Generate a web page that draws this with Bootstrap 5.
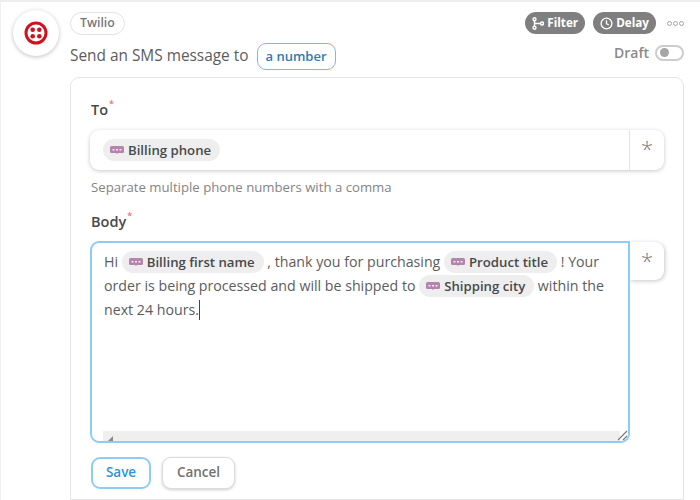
<!DOCTYPE html>
<html lang="en">
<head>
    <meta charset="UTF-8">
    <meta name="viewport" content="width=device-width, initial-scale=1.0">
    <title>Twilio step</title>
    <link href="https://cdn.jsdelivr.net/npm/bootstrap@5.3.0/dist/css/bootstrap.min.css" rel="stylesheet">
    <style>
        html, body {
            height: 500px;
            overflow: hidden;
        }
        body {
            background-color: #fff;
            font-family: "Open Sans", "Noto Sans", sans-serif;
            color: #5c5c5f;
        }
        .step-frame {
            height: 500px;
            border-top: 2px solid #eeeeee;
            border-left: 1px solid #f0f0f0;
            padding: 10px 16px 0 12px;
        }
        .step-logo {
            width: 46px;
            height: 46px;
            margin-top: -2px;
            border-radius: 50%;
            box-shadow: 0 1px 4px rgba(0, 0, 0, .25);
            flex: none;
        }
        .step-main {
            margin-left: 11px;
            min-width: 0;
        }
        .app-pill {
            height: 23px;
            padding: 0 9px;
            border: 1px solid #e2e2e2;
            border-radius: 12px;
            font-size: 12.3px;
            font-weight: 600;
            color: #77777a;
        }
        .action-pill {
            height: 22px;
            padding: 0 7px;
            border-radius: 11px;
            background-color: #7f7f7f;
            color: #fff;
            font-size: 11.7px;
            font-weight: 700;
            gap: 3px;
        }
        .more-dots {
            gap: 1px;
            margin-left: 3px;
        }
        .more-dots i {
            width: 5px;
            height: 5px;
            border: 1px solid #a3a3a3;
            border-radius: 50%;
        }
        .step-title {
            margin-top: 7px;
            height: 28px;
            font-size: 15.4px;
        }
        .number-pill {
            height: 27px;
            margin-left: 8px;
            padding: 2px 8px 0;
            border: 1px solid #7db9e4;
            border-radius: 9px;
            color: #2b7cb8;
            font-size: 13px;
            font-weight: 600;
        }
        .draft-text {
            font-size: 14px;
            font-weight: 600;
            color: #8a8a8c;
            margin-right: 6px;
        }
        .draft-toggle {
            width: 29px;
            height: 16px;
            padding-left: 3px;
            border: 2px solid #cdcdcd;
            border-radius: 8px;
        }
        .draft-toggle i {
            width: 9px;
            height: 9px;
            border-radius: 50%;
            background-color: #a5a5a5;
        }
        .form-box {
            margin-top: 7px;
            height: 424px;
            padding: 22px 19px 0 19px;
            border: 1px solid #e6e6e6;
            border-bottom-width: 2px;
            border-radius: 9px 9px 0 0;
        }
        .field-label {
            height: 20px;
            line-height: 20px;
            margin-left: 1px;
            font-size: 14.5px;
            font-weight: 600;
            color: #484a4d;
        }
        .field-label sup {
            color: #f26d6d;
            font-size: 9px;
            top: -8px;
            margin-left: 1px;
        }
        .to-field {
            margin-top: 10px;
            height: 40px;
            border-radius: 9px;
            box-shadow: 0 1px 4px rgba(0, 0, 0, .22);
        }
        .to-input {
            padding-left: 13px;
            padding-bottom: 2px;
            line-height: 24px;
        }
        .star-cell {
            width: 35px;
            height: 100%;
            flex: none;
            border-left: 1px solid #e3e3e3;
            color: #777;
            font-size: 22px;
            font-weight: 300;
            padding-top: 7px;
            line-height: 1;
        }
        .var-chip {
            display: inline-block;
            padding: 0 9px 0 7px;
            height: 22px;
            line-height: 22px;
            border-radius: 11px;
            background-color: #eeeeee;
            color: #47494c;
            font-size: 13.2px;
            font-weight: 600;
            white-space: nowrap;
        }
        .var-chip svg {
            margin-right: 4px;
            vertical-align: 1px;
        }
        .help-line {
            margin-top: 8px;
            margin-left: 1px;
            height: 18px;
            line-height: 18px;
            font-size: 13.2px;
            color: #848486;
        }
        .body-label {
            margin-top: 16px;
        }
        .body-row {
            margin-top: 9px;
        }
        .body-area {
            position: relative;
            width: 540px;
            height: 202px;
            flex: none;
            padding: 7px 10px 0 12px;
            border: 2px solid #8dcdf5;
            border-radius: 9px 0 9px 9px;
            font-size: 14.2px;
            line-height: 24px;
        }
        .text-caret {
            display: inline-block;
            width: 1px;
            height: 20px;
            background-color: #444;
            vertical-align: -5px;
        }
        .area-bar {
            position: absolute;
            left: 11px;
            right: 8px;
            bottom: 0;
            height: 10px;
            background-color: #efefef;
        }
        .corner-grip {
            position: absolute;
            right: 0;
            bottom: 0;
        }
        .left-grip {
            position: absolute;
            left: 15px;
            bottom: 0;
        }
        .body-star {
            width: 34px;
            height: 38px;
            margin-top: 1px;
            border-radius: 0 9px 9px 0;
            box-shadow: 1px 1px 4px rgba(0, 0, 0, .22);
            border-left: 0;
        }
        .form-btns {
            margin-top: 14px;
            margin-left: 1px;
            gap: 11px;
        }
        .save-btn, .cancel-btn {
            height: 32px;
            padding: 0;
            border-radius: 9px;
            font-size: 13.5px;
            font-weight: 600;
            line-height: 1;
        }
        .save-btn {
            width: 60px;
            border: 2px solid #8dcdf5;
            color: #2f92dc;
            background-color: #fff;
        }
        .cancel-btn {
            width: 73px;
            border: 1px solid #dcdcdc;
            color: #727274;
            background-color: #fff;
            box-shadow: 0 1px 3px rgba(0, 0, 0, .2);
        }
    </style>
</head>
<body>
    <div class="step-frame d-flex">
        <div class="step-logo d-flex align-items-center justify-content-center">
            <svg width="24" height="24" viewBox="0 0 24 24">
                <circle cx="12" cy="12" r="10" fill="none" stroke="#d0121f" stroke-width="3"/>
                <circle cx="8.7" cy="8.7" r="2.3" fill="#d0121f"/>
                <circle cx="15.3" cy="8.7" r="2.3" fill="#d0121f"/>
                <circle cx="8.7" cy="15.3" r="2.3" fill="#d0121f"/>
                <circle cx="15.3" cy="15.3" r="2.3" fill="#d0121f"/>
            </svg>
        </div>
        <div class="step-main flex-grow-1">
            <div class="d-flex justify-content-between align-items-start">
                <span class="app-pill d-inline-flex align-items-center">Twilio</span>
                <div class="d-flex align-items-center gap-2">
                    <span class="action-pill d-inline-flex align-items-center">
                        <svg width="12" height="13" viewBox="0 0 12 13" fill="none" stroke="#fff" stroke-width="1.4">
                            <circle cx="2.5" cy="2.2" r="1.5"/>
                            <circle cx="2.5" cy="10.8" r="1.5"/>
                            <circle cx="10" cy="6.5" r="1.5"/>
                            <path d="M2.5 3.7v5.6M2.5 6.5h6"/>
                        </svg>
                        Filter
                    </span>
                    <span class="action-pill d-inline-flex align-items-center">
                        <svg width="13" height="13" viewBox="0 0 13 13" fill="none" stroke="#fff" stroke-width="1.3">
                            <circle cx="6.5" cy="6.5" r="5.4"/>
                            <path d="M6.5 3.2v3.5l2.3 1.3"/>
                        </svg>
                        Delay
                    </span>
                    <span class="more-dots d-flex"><i></i><i></i><i></i></span>
                </div>
            </div>
            <div class="d-flex justify-content-between">
                <div class="step-title d-flex align-items-center">
                    Send an SMS message to
                    <span class="number-pill d-inline-flex align-items-center">a number</span>
                </div>
                <div class="d-flex align-items-center">
                    <span class="draft-text">Draft</span>
                    <span class="draft-toggle d-flex align-items-center"><i></i></span>
                </div>
            </div>
            <div class="form-box">
                <div class="field-label">To<sup>*</sup></div>
                <div class="to-field d-flex align-items-center">
                    <div class="to-input flex-grow-1">
                        <span class="var-chip"><svg width="14" height="8" viewBox="0 0 14 8"><rect width="14" height="7" rx="1.5" fill="#b583ad"/><path d="M2.5 3h2v1.5h-2zM6 3h2v1.5H6zM9.500 3h2v1.500h-2z" fill="#eee"/><path d="M6 7l1 1 1-1z" fill="#b583ad"/></svg>Billing phone</span>
                    </div>
                    <div class="star-cell text-center">*</div>
                </div>
                <div class="help-line">Separate multiple phone numbers with a comma</div>
                <div class="field-label body-label">Body<sup>*</sup></div>
                <div class="body-row d-flex align-items-start">
                    <div class="body-area">
                        Hi <span class="var-chip"><svg width="14" height="8" viewBox="0 0 14 8"><rect width="14" height="7" rx="1.5" fill="#b583ad"/><path d="M2.5 3h2v1.5h-2zM6 3h2v1.5H6zM9.500 3h2v1.500h-2z" fill="#eee"/><path d="M6 7l1 1 1-1z" fill="#b583ad"/></svg>Billing first name</span> , thank you for purchasing <span class="var-chip"><svg width="14" height="8" viewBox="0 0 14 8"><rect width="14" height="7" rx="1.5" fill="#b583ad"/><path d="M2.5 3h2v1.5h-2zM6 3h2v1.5H6zM9.500 3h2v1.500h-2z" fill="#eee"/><path d="M6 7l1 1 1-1z" fill="#b583ad"/></svg>Product title</span> ! Your order is being processed and will be shipped to <span class="var-chip"><svg width="14" height="8" viewBox="0 0 14 8"><rect width="14" height="7" rx="1.5" fill="#b583ad"/><path d="M2.5 3h2v1.5h-2zM6 3h2v1.5H6zM9.500 3h2v1.500h-2z" fill="#eee"/><path d="M6 7l1 1 1-1z" fill="#b583ad"/></svg>Shipping city</span> within the next 24 hours.<span class="text-caret"></span>
                        <div class="area-bar"></div>
                        <svg class="left-grip" width="7" height="6" viewBox="0 0 7 6"><path d="M1 6l5-5v5z" fill="#8a8a8a"/></svg>
                        <svg class="corner-grip" width="11" height="11" viewBox="0 0 11 11" stroke="#777" stroke-width="1.1"><path d="M1 10l9-9M6 10l4-4"/></svg>
                    </div>
                    <div class="star-cell body-star text-center">*</div>
                </div>
                <div class="form-btns d-flex">
                    <button type="button" class="btn save-btn">Save</button>
                    <button type="button" class="btn cancel-btn">Cancel</button>
                </div>
            </div>
        </div>
    </div>
</body>
</html>
